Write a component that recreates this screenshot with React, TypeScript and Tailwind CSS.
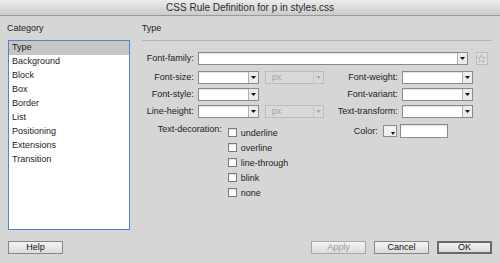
import React from "react";

const Arrow = ({ disabled }: { disabled?: boolean }) => (
  <svg width="5" height="3" viewBox="0 0 5 3">
    <path d="M0 0H5L2.5 3Z" fill={disabled ? "#a8a8a8" : "#111"} />
  </svg>
);

function Select({ w }: { w: string }) {
  return (
    <div className={`flex h-[13px] border border-[#8a8a8a] bg-white shadow-[inset_0_1px_1px_rgba(0,0,0,0.12)] ${w}`}>
      <div className="flex-1" />
      <div className="flex w-[10px] items-center justify-center border-l border-[#b0b0b0] bg-[#ececec]">
        <Arrow />
      </div>
    </div>
  );
}

function PxSelect() {
  return (
    <div className="ml-[6px] flex h-[13px] w-[59px] border border-[#bcbcbc] bg-[#d9d9d9]">
      <div className="flex-1 pl-[6px] text-[9px] leading-[11px] text-[#a6a6a6]">px</div>
      <div className="flex w-[10px] items-center justify-center border-l border-[#c6c6c6]">
        <Arrow disabled />
      </div>
    </div>
  );
}

const Label = ({ w, children }: { w: string; children: React.ReactNode }) => (
  <div className={`shrink-0 text-right text-[9px] leading-[13px] text-[#1c1c1c] ${w}`}>{children}</div>
);

const Check = ({ label }: { label: string }) => (
  <div className="flex h-[15px] items-start">
    <div className="mt-[0px] h-[9px] w-[9px] border border-[#7a7a7a] bg-white shadow-[inset_0_1px_1px_rgba(0,0,0,0.12)]" />
    <span className="ml-[4px] text-[9px] leading-[10px] text-[#1c1c1c]">{label}</span>
  </div>
);

function Button({ children, kind }: { children: React.ReactNode; kind?: "disabled" | "default" }) {
  const border =
    kind === "default"
      ? "border-2 border-[#6a6a6a]"
      : kind === "disabled"
      ? "border border-[#a9a9a9]"
      : "border border-[#858585]";
  const text = kind === "disabled" ? "text-[#9c9c9c]" : "text-[#111]";
  return (
    <div
      className={`flex h-[13px] w-[55px] items-center justify-center bg-gradient-to-b from-[#f3f3f3] to-[#dcdcdc] text-[9px] ${border} ${text}`}
    >
      {children}
    </div>
  );
}

const items = ["Type", "Background", "Block", "Box", "Border", "List", "Positioning", "Extensions", "Transition"];

export default function App() {
  return (
    <div
      className="flex h-[263px] w-[500px] flex-col overflow-hidden bg-[#d6d6d6] text-[#1c1c1c]"
      style={{ fontFamily: '"Liberation Sans", Arial, sans-serif' }}
    >
      {/* title bar */}
      <div className="flex h-[16px] shrink-0 items-center justify-center border-b border-[#9a9a9a] bg-gradient-to-b from-[#ececec] to-[#cbcbcb] text-[10px] text-[#2a2a2a]">
        CSS Rule Definition for p in styles.css
      </div>

      <div className="flex flex-1 flex-col px-[8px] pt-[7px]">
        <div className="flex">
          {/* left column */}
          <div className="flex w-[122px] flex-col">
            <div className="h-[11px] pl-[0px] text-[9px] leading-[11px] -ml-[1px]">Category</div>
            <div className="mt-[6px] h-[190px] border border-[#4b86cf] bg-white">
              {items.map((it, i) => (
                <div
                  key={it}
                  className={`h-[14px] pl-[3px] text-[9px] leading-[13px] ${i === 0 ? "bg-[#c6c6c6]" : ""}`}
                >
                  {it}
                </div>
              ))}
            </div>
          </div>

          {/* right column */}
          <div className="ml-[12px] flex w-[351px] flex-col">
            <div className="h-[11px] text-[9px] leading-[11px]">Type</div>
            <div className="mt-[6px] border-t border-[#b5b5b5]" />

            {/* Row 1 */}
            <div className="mt-[11px] flex items-center">
              <Label w="w-[52px]">Font-family:</Label>
              <div className="ml-[4px] flex h-[13px] w-[270px] border border-[#8a8a8a] bg-white shadow-[inset_0_1px_1px_rgba(0,0,0,0.12)]">
                <div className="flex-1" />
                <div className="flex w-[10px] items-center justify-center border-l border-[#b0b0b0] bg-[#ececec]">
                  <Arrow />
                </div>
              </div>
              <div className="-mt-[1px] ml-[8px] flex h-[13px] w-[12px] items-center justify-center border border-[#bdbdbd] bg-[#dedede]">
                <svg width="9" height="9" viewBox="0 0 10 10">
                  <path
                    d="M5 0.6L6.2 3.7L9.5 3.8L6.9 5.9L7.8 9.2L5 7.3L2.2 9.2L3.1 5.9L0.5 3.8L3.8 3.7Z"
                    fill="none"
                    stroke="#ababab"
                    strokeWidth="0.8"
                  />
                </svg>
              </div>
            </div>

            {/* Row 2 */}
            <div className="mt-[6px] flex items-center">
              <Label w="w-[52px]">Font-size:</Label>
              <div className="ml-[4px]">
                <Select w="w-[61px]" />
              </div>
              <PxSelect />
              <Label w="w-[74px]">Font-weight:</Label>
              <div className="ml-[4px]">
                <Select w="w-[71px]" />
              </div>
            </div>

            {/* Row 3 */}
            <div className="mt-[4px] flex items-center">
              <Label w="w-[52px]">Font-style:</Label>
              <div className="ml-[4px]">
                <Select w="w-[61px]" />
              </div>
              <div className="ml-[6px] w-[59px]" />
              <Label w="w-[74px]">Font-variant:</Label>
              <div className="ml-[4px]">
                <Select w="w-[71px]" />
              </div>
            </div>

            {/* Row 4 */}
            <div className="mt-[4px] flex items-center">
              <Label w="w-[52px]">Line-height:</Label>
              <div className="ml-[4px]">
                <Select w="w-[61px]" />
              </div>
              <PxSelect />
              <Label w="w-[74px]">Text-transform:</Label>
              <div className="ml-[4px]">
                <Select w="w-[71px]" />
              </div>
            </div>

            {/* Row 5 */}
            <div className="mt-[6px] flex items-start">
              <div className="w-[80px] pt-[0px] text-right text-[9px] leading-[10px]">Text-decoration:</div>
              <div className="ml-[6px] mt-[4px] flex w-[72px] flex-col">
                <Check label="underline" />
                <Check label="overline" />
                <Check label="line-through" />
                <Check label="blink" />
                <Check label="none" />
              </div>
              <div className="flex items-center">
                <div className="w-[78px] text-right text-[9px] leading-[13px]">Color:</div>
                <div className="relative ml-[5px] h-[12px] w-[14px] border border-[#8a8a8a] bg-[#f1f1f1]">
                  <div className="absolute bottom-[1px] right-[1px]">
                    <svg width="4" height="3" viewBox="0 0 4 3">
                      <path d="M0 0H4L2 3Z" fill="#111" />
                    </svg>
                  </div>
                </div>
                <div className="ml-[3px] h-[14px] w-[48px] border border-[#8a8a8a] bg-white shadow-[inset_0_1px_1px_rgba(0,0,0,0.12)]" />
              </div>
            </div>
          </div>
        </div>

        {/* buttons */}
        <div className="mt-[11px] flex items-center">
          <Button>Help</Button>
          <div className="flex-1" />
          <Button kind="disabled">Apply</Button>
          <div className="ml-[8px]">
            <Button>Cancel</Button>
          </div>
          <div className="ml-[8px]">
            <Button kind="default">OK</Button>
          </div>
        </div>
      </div>
    </div>
  );
}
